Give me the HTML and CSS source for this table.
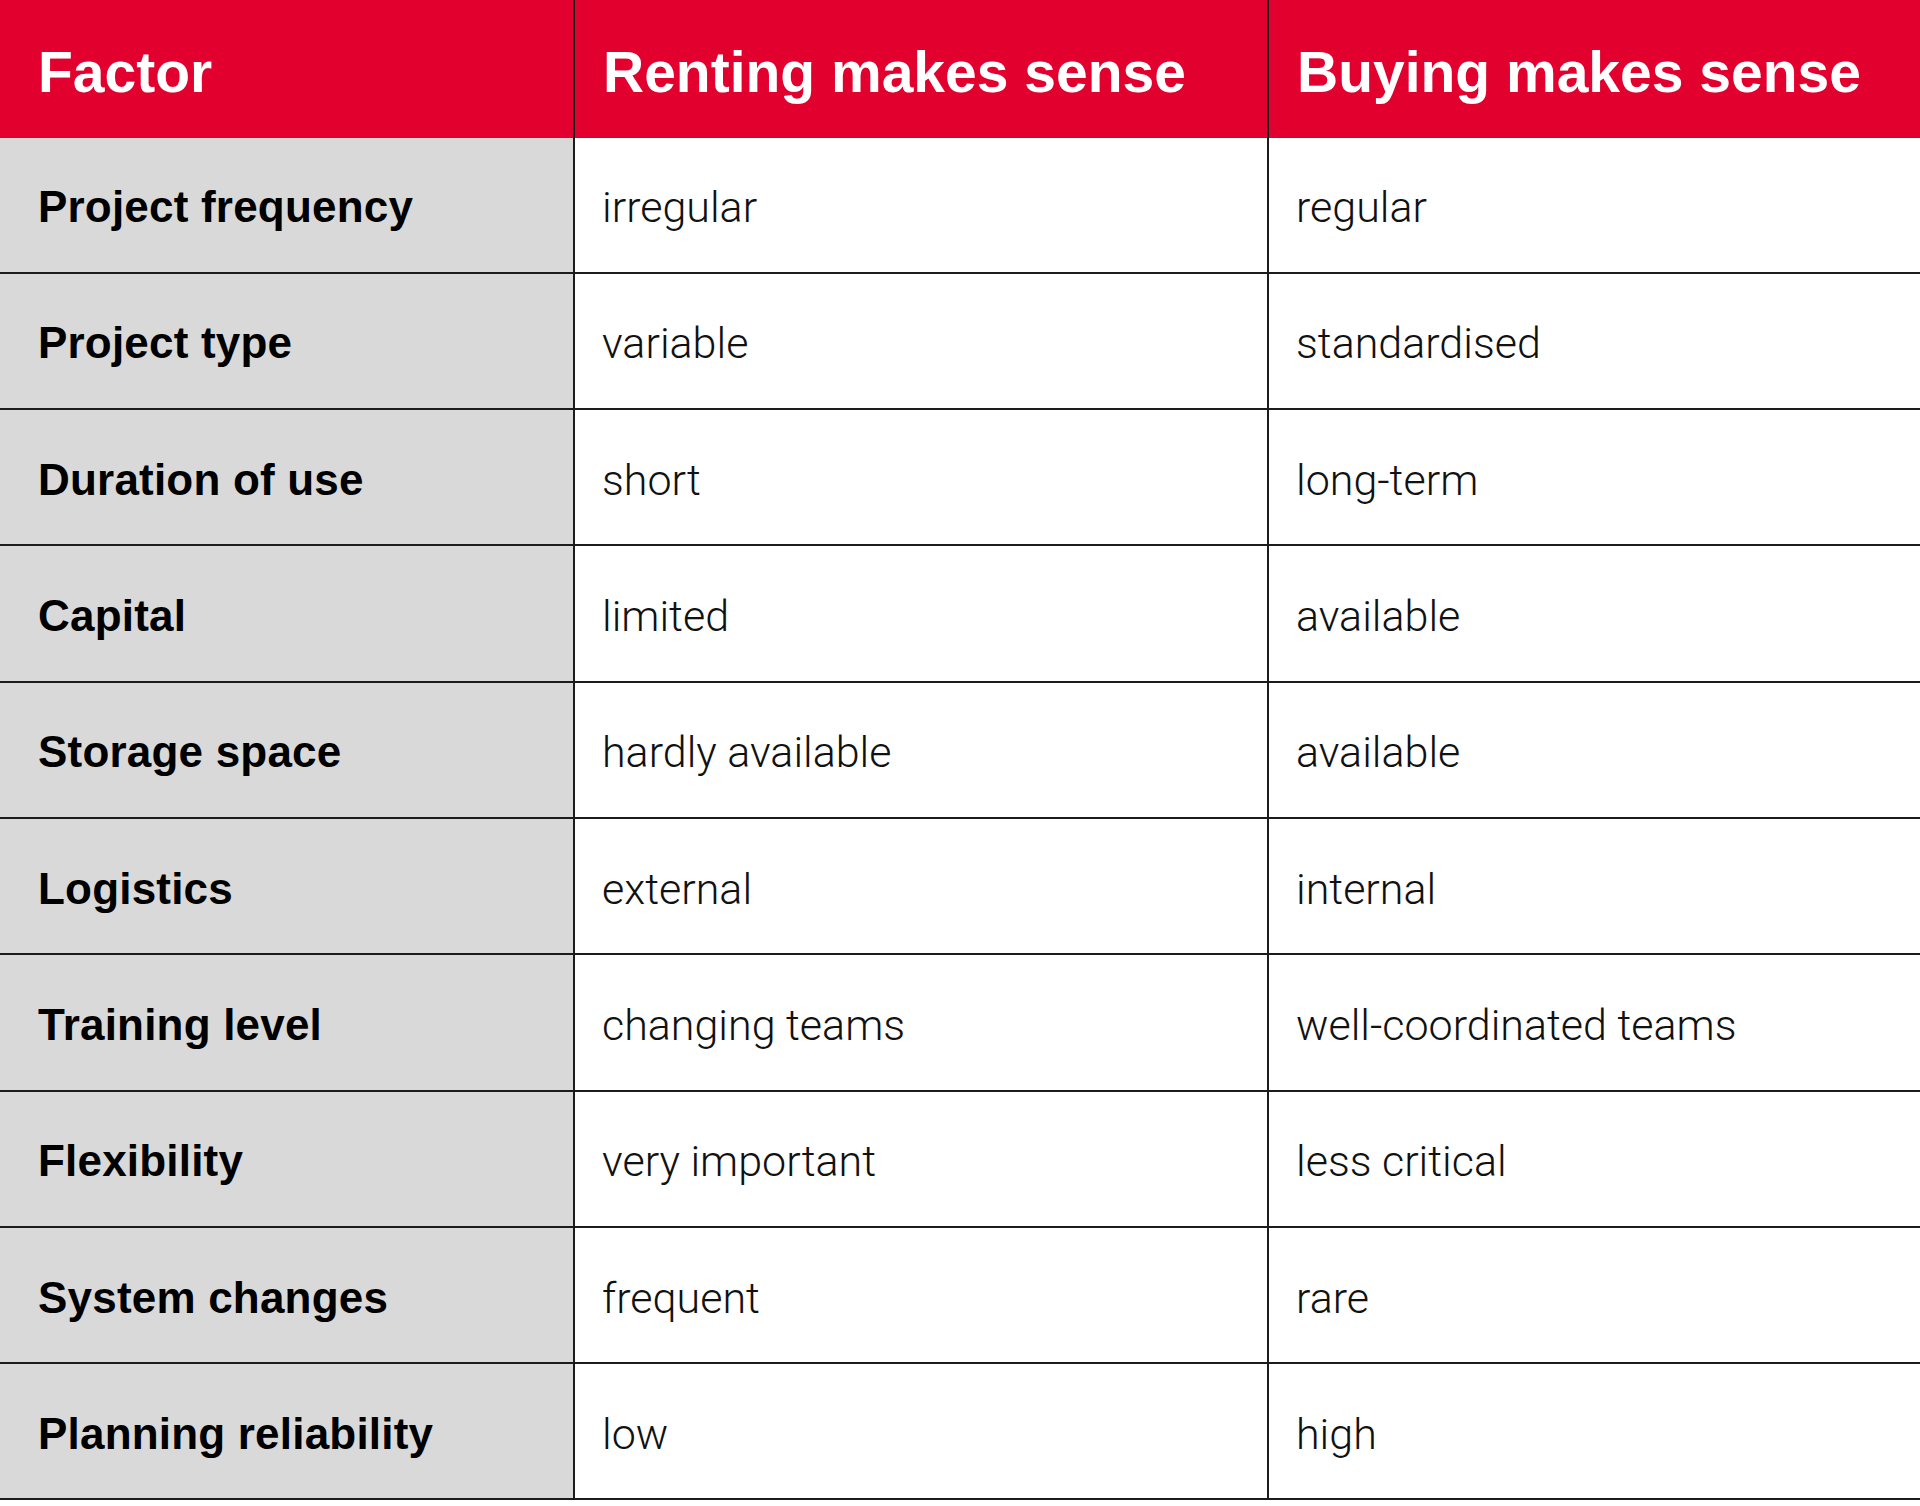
FILE: index.html
```html
<!DOCTYPE html>
<html lang="en">
<head>
<meta charset="utf-8">
<title>Renting vs Buying</title>
<link rel="stylesheet" href="styles.css">
</head>
<body>
<div class="table">
  <div class="row head">
    <div class="cell c1">Factor</div>
    <div class="cell c2">Renting makes sense</div>
    <div class="cell c3">Buying makes sense</div>
  </div>
  <div class="row"><div class="cell c1">Project frequency</div><div class="cell c2">irregular</div><div class="cell c3">regular</div></div>
  <div class="row"><div class="cell c1">Project type</div><div class="cell c2">variable</div><div class="cell c3">standardised</div></div>
  <div class="row"><div class="cell c1">Duration of use</div><div class="cell c2">short</div><div class="cell c3">long-term</div></div>
  <div class="row"><div class="cell c1">Capital</div><div class="cell c2">limited</div><div class="cell c3">available</div></div>
  <div class="row"><div class="cell c1">Storage space</div><div class="cell c2">hardly available</div><div class="cell c3">available</div></div>
  <div class="row"><div class="cell c1">Logistics</div><div class="cell c2">external</div><div class="cell c3">internal</div></div>
  <div class="row"><div class="cell c1">Training level</div><div class="cell c2">changing teams</div><div class="cell c3">well-coordinated teams</div></div>
  <div class="row"><div class="cell c1">Flexibility</div><div class="cell c2">very important</div><div class="cell c3">less critical</div></div>
  <div class="row"><div class="cell c1">System changes</div><div class="cell c2">frequent</div><div class="cell c3">rare</div></div>
  <div class="row"><div class="cell c1">Planning reliability</div><div class="cell c2">low</div><div class="cell c3">high</div></div>
</div>
</body>
</html>
```

FILE: styles.css
```css
html, body {
  margin: 0;
  padding: 0;
  background: #ffffff;
}

.table {
  width: 1920px;
  display: flex;
  flex-direction: column;
}

.row {
  display: grid;
  grid-template-columns: 573px 694px 1fr;
  height: 136.3px;
  box-sizing: border-box;
  border-bottom: 2px solid #1c1c1c;
}

.row.head {
  height: 137.5px;
  border-bottom: none;
  background: #e2002f;
}

.cell {
  display: flex;
  align-items: center;
  box-sizing: border-box;
  font-family: "Roboto", "Liberation Sans", sans-serif;
  font-weight: 300;
  font-size: 43px;
  color: #111111;
  padding-left: 27px;
  padding-top: 5px;
  white-space: nowrap;
}

.c1 {
  background: #d9d9d9;
  padding-left: 38px;
  font-family: "Liberation Sans", Arial, sans-serif;
  font-weight: 700;
  font-size: 44px;
  letter-spacing: 0.2px;
  color: #000000;
}

.c2, .c3 {
  border-left: 2px solid #1c1c1c;
}

.head .cell {
  background: transparent;
  font-family: "Liberation Sans", Arial, sans-serif;
  font-weight: 700;
  font-size: 57px;
  color: #ffffff;
  padding-top: 6px;
  letter-spacing: 0;
}

.head .c2, .head .c3 {
  padding-left: 28px;
}
```
